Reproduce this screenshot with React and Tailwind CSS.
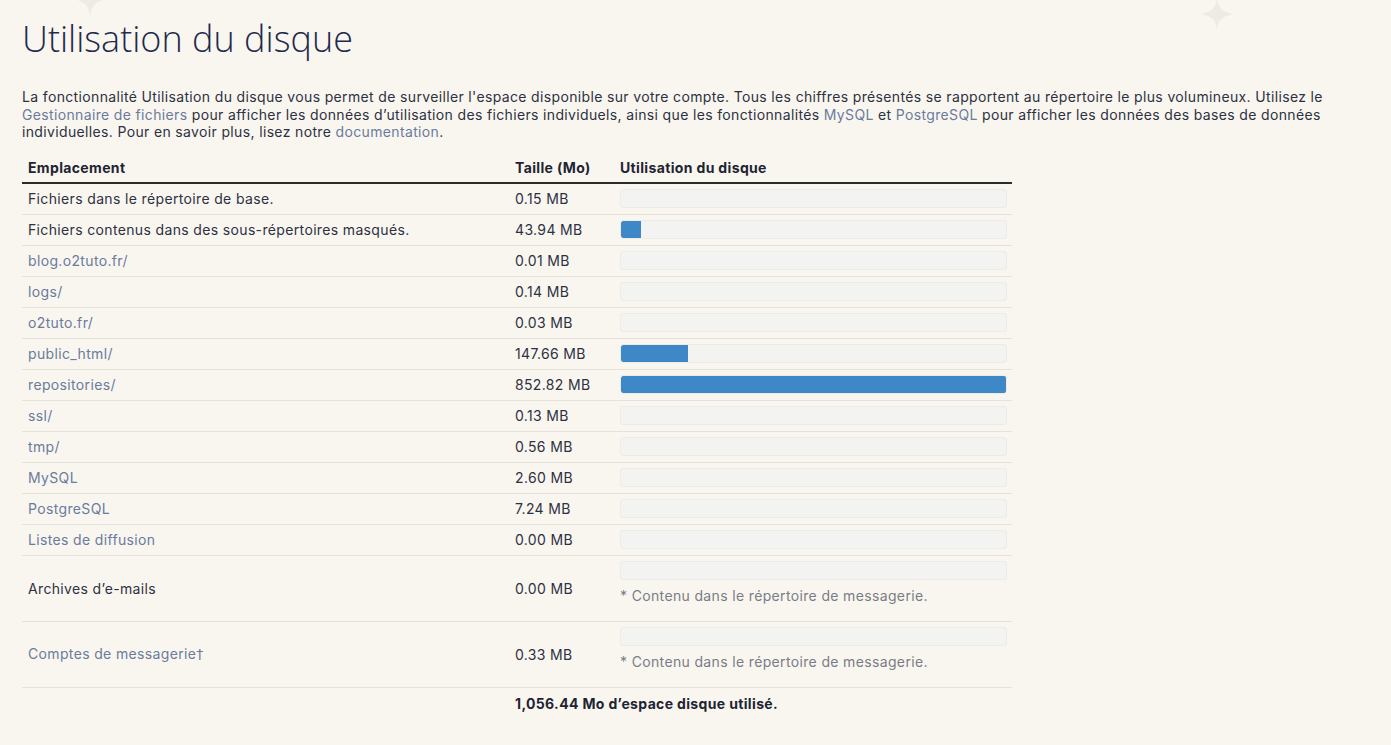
import React from "react";

const rows = [
  { name: "Fichiers dans le répertoire de base.", link: false, size: "0.15 MB", v: 0.15 },
  { name: "Fichiers contenus dans des sous-répertoires masqués.", link: false, size: "43.94 MB", v: 43.94 },
  { name: "blog.o2tuto.fr/", link: true, size: "0.01 MB", v: 0.01 },
  { name: "logs/", link: true, size: "0.14 MB", v: 0.14 },
  { name: "o2tuto.fr/", link: true, size: "0.03 MB", v: 0.03 },
  { name: "public_html/", link: true, size: "147.66 MB", v: 147.66 },
  { name: "repositories/", link: true, size: "852.82 MB", v: 852.82 },
  { name: "ssl/", link: true, size: "0.13 MB", v: 0.13 },
  { name: "tmp/", link: true, size: "0.56 MB", v: 0.56 },
  { name: "MySQL", link: true, size: "2.60 MB", v: 2.6 },
  { name: "PostgreSQL", link: true, size: "7.24 MB", v: 7.24 },
  { name: "Listes de diffusion", link: true, size: "0.00 MB", v: 0 },
];

const MAX = 852.82;

function Bar({ v }) {
  const pct = (v / MAX) * 100;
  return (
    <div className="h-[19px] w-[387px] rounded-[3px] bg-[#f3f3f2] border border-[#ecebe8] overflow-hidden">
      {pct >= 1 && (
        <div className="h-full bg-[#3f88c8] rounded-l-[2px]" style={{ width: `${pct}%` }} />
      )}
    </div>
  );
}

function Sparkle({ className }) {
  return (
    <svg viewBox="0 0 40 40" className={className}>
      <path
        d="M20 2 C22 12 24 16 36 19 C38 19.5 38 20.5 36 21 C24 24 22 28 20 38 C18 28 16 24 4 21 C2 20.5 2 19.5 4 19 C16 16 18 12 20 2 Z"
        fill="#eeebe5"
      />
    </svg>
  );
}

export default function App() {
  return (
    <div
      className="relative min-h-[745px] w-full bg-[#f9f6f0] text-[#2d3142] overflow-hidden tracking-[0.35px]"
      style={{ fontFamily: "Inter, 'Noto Sans', sans-serif" }}
    >
      <Sparkle className="absolute left-[70px] top-[-22px] w-[40px] h-[40px]" />
      <Sparkle className="absolute left-[1200px] top-[-3px] w-[34px] h-[34px]" />
      <div className="relative px-[22px] pt-[17px]">
        <h1
          className="text-[36px] font-light leading-[44px] text-[#1f2a4d] tracking-normal"
          style={{ fontFamily: "'Open Sans', sans-serif" }}
        >
          Utilisation du disque
        </h1>
        <p className="mt-[27px] text-[14px] leading-[17.5px] pr-[30px]">
          La fonctionnalité Utilisation du disque vous permet de surveiller l'espace disponible sur votre compte. Tous les
          chiffres présentés se rapportent au répertoire le plus volumineux. Utilisez le{" "}
          <span className="text-[#6b7b9c]">Gestionnaire de fichiers</span> pour afficher les données d’utilisation des
          fichiers individuels, ainsi que les fonctionnalités <span className="text-[#6b7b9c]">MySQL</span> et{" "}
          <span className="text-[#6b7b9c]">PostgreSQL</span> pour afficher les données des bases de données
          individuelles. Pour en savoir plus, lisez notre <span className="text-[#6b7b9c]">documentation</span>.
        </p>

        <div className="mt-[12px] w-[990px] text-[14px]">
          <div className="flex h-[31px] items-center border-b-2 border-[#2b2b2b] font-bold text-[#1f2433]">
            <div className="w-[486px] pl-[6px]">Emplacement</div>
            <div className="w-[106px] pl-[7px]">Taille (Mo)</div>
            <div className="flex-1 pl-[6px]">Utilisation du disque</div>
          </div>
          {rows.map((r) => (
            <div key={r.name} className="flex h-[31px] items-center border-b border-[#e5e2dc]">
              <div className={`w-[486px] pl-[6px] ${r.link ? "text-[#6b7b9c]" : ""}`}>{r.name}</div>
              <div className="w-[106px] pl-[7px]">{r.size}</div>
              <div className="flex-1 pl-[6px]">
                <Bar v={r.v} />
              </div>
            </div>
          ))}
          {[
            { name: "Archives d’e-mails", link: false, size: "0.00 MB", v: 0, dagger: false },
            { name: "Comptes de messagerie", link: true, size: "0.33 MB", v: 0.33, dagger: true },
          ].map((r) => (
            <div key={r.name} className="flex h-[66px] items-center border-b border-[#e5e2dc]">
              <div className={`w-[486px] pl-[6px] ${r.link ? "text-[#6b7b9c]" : ""}`}>
                {r.name}
                {r.dagger && <span style={{ fontFamily: "'DejaVu Sans', sans-serif" }}>†</span>}
              </div>
              <div className="w-[106px] pl-[7px]">{r.size}</div>
              <div className="flex-1 pl-[6px] pt-[4px] self-start">
                <div className="mt-[1px]">
                  <Bar v={r.v} />
                </div>
                <div className="mt-[5px] text-[#7a7d85]">* Contenu dans le répertoire de messagerie.</div>
              </div>
            </div>
          ))}
          <div className="flex h-[32px] items-center font-bold text-[#1f2433]">
            <div className="w-[486px]" />
            <div className="pl-[7px]">1,056.44 Mo d’espace disque utilisé.</div>
          </div>
        </div>
      </div>
    </div>
  );
}
